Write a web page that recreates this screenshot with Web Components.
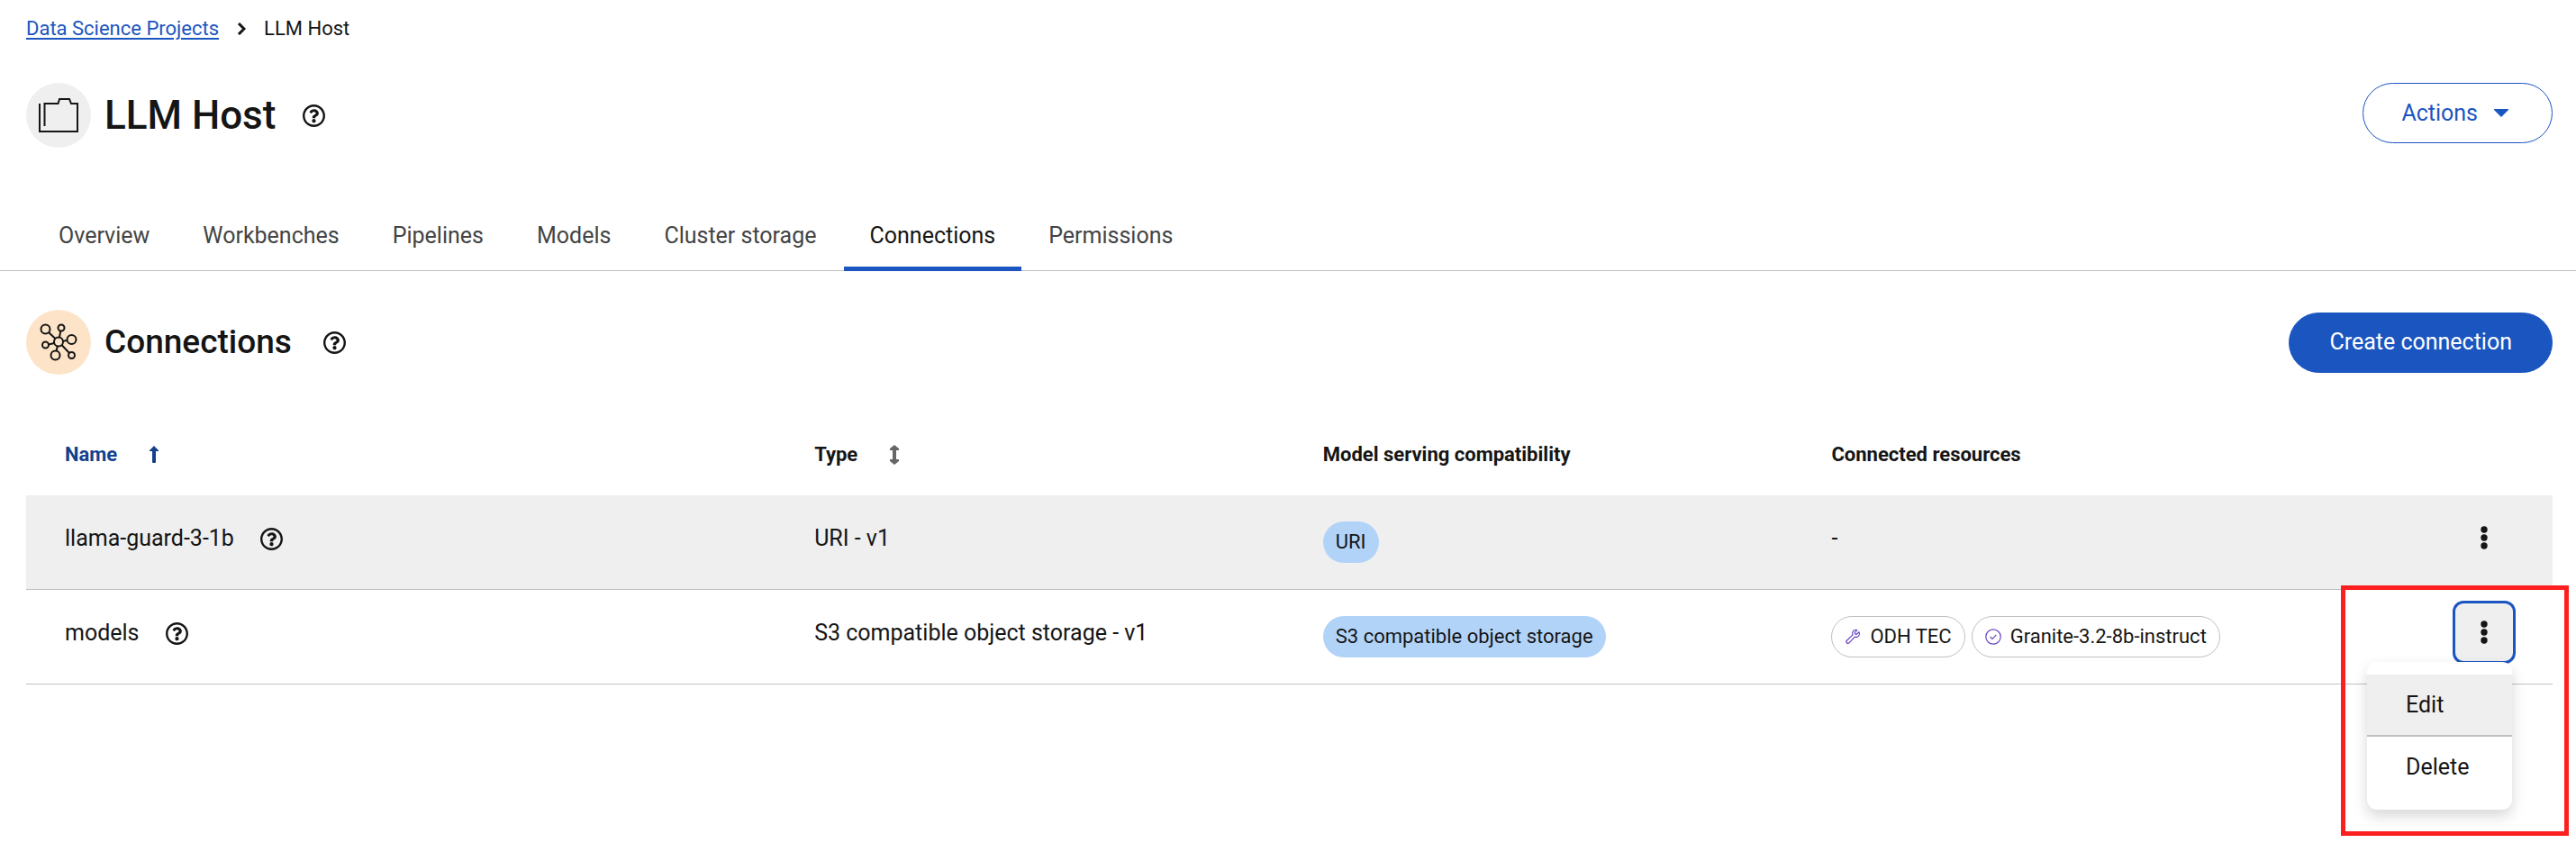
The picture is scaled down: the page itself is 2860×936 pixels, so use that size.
<!DOCTYPE html>
<html lang="en">
<head>
<meta charset="utf-8">
<title>LLM Host - Connections</title>
<style>
  html { background: #fff; }
  body {
    margin: 0;
    font: 400 25px/38px Roboto, "Liberation Sans", sans-serif;
    color: #151515;
    --blue: #1b55c0;
    --navy: #15418c;
    --line: #c0c0c0;
    --shade: #efefef;
    --gutter: 29px;
  }
</style>
</head>
<body>
<project-page></project-page>

<script>
const define = (name, html, setup) => {
  const tpl = document.createElement('template');
  tpl.innerHTML = html;
  customElements.define(name, class extends HTMLElement {
    constructor() {
      super();
      this.attachShadow({ mode: 'open' }).append(tpl.content.cloneNode(true));
    }
    connectedCallback() { if (setup) setup(this, this.shadowRoot); }
  });
};

define('help-button', `
  <style>
    :host { display: inline-flex; }
    button { display: flex; padding: 0; border: 0; background: none; color: inherit; cursor: pointer; }
    svg { display: block; width: 25px; height: 25px; }
  </style>
  <button type="button" aria-label="More info">
    <svg viewBox="8 8 496 496" fill="currentColor"><path d="M256 8C119 8 8 119 8 256s111 248 248 248 248-111 248-248S393 8 256 8zm0 448c-110.500 0-200-89.400-200-200 0-110.500 89.500-200 200-200 110.500 0 200 89.500 200 200 0 110.500-89.400 200-200 200zm107.200-255.200c0 67.100-72.400 68.100-72.400 92.900V300c0 6.600-5.400 12-12 12h-45.600c-6.600 0-12-5.400-12-12v-8.700c0-35.700 27.100-50 47.600-61.500 17.600-9.800 28.300-16.500 28.300-29.600 0-17.200-22-28.700-39.800-28.700-23.200 0-33.900 11-49 30-4.100 5.100-11.500 6.100-16.700 2.100l-27.800-21.100c-5.100-3.900-6.300-11.100-2.600-16.400C184.800 131.500 214.900 112 261.800 112c49 0 101.500 38.300 101.500 88.800zM298 368c0 23.200-18.800 42-42 42s-42-18.800-42-42 18.800-42 42-42 42 18.800 42 42z"/></svg>
  </button>`);

define('page-breadcrumb', `
  <style>
    :host { display: block; font-size: 22px; line-height: 34px; }
    ol { display: flex; align-items: center; gap: 20px; margin: 0; padding: 0; list-style: none; }
    li { display: flex; align-items: center; gap: 20px; }
    a { color: var(--blue); text-decoration: underline; text-underline-offset: 3px; text-decoration-thickness: 2px; }
    svg { display: block; width: 10px; height: 14px; }
  </style>
  <nav aria-label="Breadcrumb"><ol>
    <li><a href="#projects">Data Science Projects</a></li>
    <li><svg viewBox="0 0 10 14" fill="none" stroke="#151515" stroke-width="3"><path d="M2 1l6 6-6 6"/></svg><span>LLM Host</span></li>
  </ol></nav>`);

/* Round icon, heading and help on the left; the slotted action on the right. */
define('title-bar', `
  <style>
    :host { display: flex; align-items: center; justify-content: space-between; padding: 0 26px 0 var(--gutter); }
    :host([level=h1]) { align-items: flex-start; }
    .left { display: flex; align-items: center; gap: 15px; }
    .disc { display: flex; align-items: center; justify-content: center; width: 72px; height: 72px; border-radius: 50%; background: var(--disc, var(--shade)); }
    h1, h2 { margin: 0 15px 0 0; font-weight: 500; }
    h1 { font-size: 44px; line-height: 56px; }
    h2 { font-size: 37px; line-height: 48px; margin-right: 20px; }
  </style>
  <div class="left"><span class="disc"><slot name="icon"></slot></span><slot name="heading"></slot><help-button></help-button></div>
  <slot name="action"></slot>`, (el, root) => {
    if (root.querySelector('h1,h2')) return;
    const h = document.createElement(el.getAttribute('level') || 'h2');
    h.textContent = el.getAttribute('heading');
    root.querySelector('slot[name=heading]').replaceWith(h);
  });

define('pill-button', `
  <style>
    :host { display: inline-flex; }
    button { display: flex; align-items: center; gap: 18px; height: 67px; padding: 0 48px 0 42px; border: 1px solid var(--blue); border-radius: 34px; font: inherit; cursor: pointer; color: var(--blue); background: #fff; }
    :host([primary]) button { padding: 0 44px; background: var(--blue); color: #fff; }
  </style>
  <button type="button"><slot></slot></button>`);

define('page-tabs', `
  <style>
    :host { display: block; border-bottom: 1px solid var(--line); }
    ul { display: flex; gap: 1px; margin: 0 0 -1px; padding: 0 36px; list-style: none; }
    a { display: block; padding: 16px 29px 15px; border-bottom: 5px solid transparent; color: #444; text-decoration: none; white-space: nowrap; }
    a[aria-current] { color: #151515; border-color: var(--blue); }
  </style>
  <nav aria-label="Project sections"><ul>
    <li><a href="#overview">Overview</a></li>
    <li><a href="#workbenches">Workbenches</a></li>
    <li><a href="#pipelines">Pipelines</a></li>
    <li><a href="#models">Models</a></li>
    <li><a href="#storage">Cluster storage</a></li>
    <li><a href="#connections" aria-current="page">Connections</a></li>
    <li><a href="#permissions">Permissions</a></li>
  </ul></nav>`);

define('chip-label', `
  <style>
    :host { display: inline-flex; align-items: center; gap: 10px; box-sizing: border-box; height: 46px; padding: 0 14px; border-radius: 23px; font-size: 22px; white-space: nowrap; background: #b2d3f8; vertical-align: top; }
    :host([outline]) { background: #fff; border: 1px solid var(--line); }
    ::slotted(svg) { display: block; width: 18px; height: 18px; color: #6a45c4; }
  </style>
  <slot name="icon"></slot><slot></slot>`);

define('row-actions', `
  <style>
    :host { display: block; position: relative; width: 70px; height: 70px; }
    button.toggle { display: flex; align-items: center; justify-content: center; width: 70px; height: 70px; padding: 0; border: 3px solid transparent; border-radius: 12px; background: none; color: inherit; cursor: pointer; }
    :host([open]) button.toggle { border-color: var(--blue); background: var(--shade); }
    svg { display: block; width: 8px; height: 26px; }
    ul { display: none; position: absolute; top: 68px; right: 4px; width: 161px; margin: 0; padding: 14px 0; box-sizing: border-box; list-style: none; border-radius: 11px; background: #fff; box-shadow: 0 7px 16px rgba(0,0,0,.16); z-index: 1; }
    :host([open]) ul { display: block; }
    li button { display: block; width: 100%; height: 67px; padding: 0 43px; border: 0; background: none; font: inherit; color: inherit; text-align: left; cursor: pointer; }
    li:first-child { border-bottom: 2px solid var(--line); background: var(--shade); }
    .frame { display: none; position: absolute; top: -17px; right: -59px; width: 253px; height: 278px; box-sizing: border-box; border: 5px solid #fc1f1f; pointer-events: none; z-index: 2; }
    :host([open]) .frame { display: block; }
  </style>
  <button class="toggle" type="button" aria-label="Row actions"><svg viewBox="0 0 8 26" fill="currentColor"><circle cx="4" cy="4" r="3.700"/><circle cx="4" cy="13" r="3.700"/><circle cx="4" cy="22" r="3.700"/></svg></button>
  <ul role="menu"><li role="none"><button type="button" role="menuitem">Edit</button></li><li role="none"><button type="button" role="menuitem">Delete</button></li></ul>
  <div class="frame"></div>`);

define('connections-table', `
  <style>
    :host { display: block; padding: 0 26px 0 var(--gutter); }
    table { width: 100%; table-layout: fixed; border-collapse: separate; border-spacing: 0; }
    col.name { width: 30.700%; }
    col.mid { width: 20.130%; }
    col.actions { width: 125px; }
    th { height: 90px; padding: 2px 14px 0; font-size: 22px; font-weight: 700; text-align: left; vertical-align: middle; }
    tbody td { height: 46px; padding: 29px 14px; vertical-align: top; border-bottom: 1px solid var(--line); }
    th:first-child, tbody td:first-child { padding-left: 43px; }
    tbody td:last-child { padding: 12px 14px 0; }
    th button { display: flex; align-items: center; gap: 36px; padding: 0; border: 0; background: none; font: inherit; color: inherit; cursor: pointer; }
    th svg { display: block; width: 10px; height: 22px; color: #666; }
    [aria-sort] button, [aria-sort] svg { color: var(--navy); }
    tr.hover td { background: var(--shade); }
    .cell { display: flex; align-items: center; gap: 29px; }
    .chips { display: flex; gap: 7px; }
  </style>
  <table aria-label="Connections">
    <colgroup><col class="name"><col class="mid"><col class="mid"><col><col class="actions"></colgroup>
    <thead><tr>
      <th aria-sort="ascending"><button type="button">Name<svg viewBox="0 0 10 22" fill="currentColor"><path d="M5 1l5 5v1H7v12q0 1-1 1H4q-1 0-1-1V7H0V6z"/></svg></button></th>
      <th><button type="button">Type<svg viewBox="0 0 10 22" fill="currentColor"><path d="M5 0l5 4v2H7v10h3v2l-5 4-5-4v-2h3V6H0V4z"/></svg></button></th>
      <th>Model serving compatibility</th>
      <th>Connected resources</th>
      <td></td>
    </tr></thead>
    <tbody>
      <tr class="hover">
        <td><div class="cell">llama-guard-3-1b<help-button></help-button></div></td>
        <td>URI - v1</td>
        <td><chip-label>URI</chip-label></td>
        <td>-</td>
        <td><row-actions></row-actions></td>
      </tr>
      <tr>
        <td><div class="cell">models<help-button></help-button></div></td>
        <td>S3 compatible object storage - v1</td>
        <td><chip-label>S3 compatible object storage</chip-label></td>
        <td><div class="chips">
          <chip-label outline><svg slot="icon" viewBox="0 0 18 18" fill="none" stroke="currentColor" stroke-width="1.200" stroke-linejoin="round"><path d="M15.900 3.700l-2.700 2.600-1.500-.4-.4-1.500 2.600-2.700c-1.900-.7-4.100.2-4.900 2-.5 1-.4 2.200 0 3.200l-6.600 6.300a1.800 1.800 0 0 0 2.500 2.600l6.400-6.700c1.100.5 2.300.4 3.300-.2 1.700-1 2.300-3.400 1.300-5.200z"/></svg>ODH TEC</chip-label>
          <chip-label outline><svg slot="icon" viewBox="0 0 18 18" fill="none" stroke="currentColor" stroke-width="1.200"><circle cx="9" cy="9" r="8.200"/><path d="M5.600 9l2.400 2.400 4.400-4.600"/></svg>Granite-3.2-8b-instruct</chip-label>
        </div></td>
        <td><row-actions open></row-actions></td>
      </tr>
    </tbody>
  </table>`);

define('project-page', `
  <style>
    :host { display: flex; flex-direction: column; min-height: 100vh; }
    page-breadcrumb { padding: 15px var(--gutter) 43px; }
    page-tabs { margin: 63px 0 43px; }
    connections-table { margin-top: 42px; }
    .connections { --disc: #fde4c8; }
    .caret { display: block; width: 16px; height: 9px; }
    .folder { display: block; width: 46px; height: 46px; }
    .graph { display: block; width: 42px; height: 42px; }
  </style>
  <page-breadcrumb></page-breadcrumb>
  <title-bar level="h1" heading="LLM Host">
    <svg class="folder" slot="icon" viewBox="0 0 46 46" fill="none" stroke="#151515" stroke-width="2"><path d="M2 10v31h42V10H37l-2-5H24l-1.500 5H7.500v25"/></svg>
    <pill-button slot="action">Actions<svg class="caret" viewBox="0 0 16 9" fill="#1b55c0"><path d="M0 0h16v1L8 9 0 1z"/></svg></pill-button>
  </title-bar>
  <page-tabs></page-tabs>
  <title-bar class="connections" heading="Connections">
    <svg class="graph" slot="icon" viewBox="0 0 42 42" fill="none" stroke="#151515" stroke-width="2"><circle cx="21" cy="20.500" r="5"/><circle cx="6.500" cy="6.500" r="5"/><circle cx="24" cy="5" r="3.500"/><circle cx="35.500" cy="18" r="5"/><circle cx="6.500" cy="24" r="3.500"/><circle cx="17.500" cy="35.500" r="5"/><circle cx="35.500" cy="35.500" r="3.500"/><path d="M10 10l7.500 7M23.300 8.500L22 15.500M26 19.700l4.500-.7M10 23.500l6-1.500M19.700 25.500l-1 5M24.500 24l8.500 9"/></svg>
    <pill-button primary slot="action">Create connection</pill-button>
  </title-bar>
  <connections-table></connections-table>`);
</script>
</body>
</html>
